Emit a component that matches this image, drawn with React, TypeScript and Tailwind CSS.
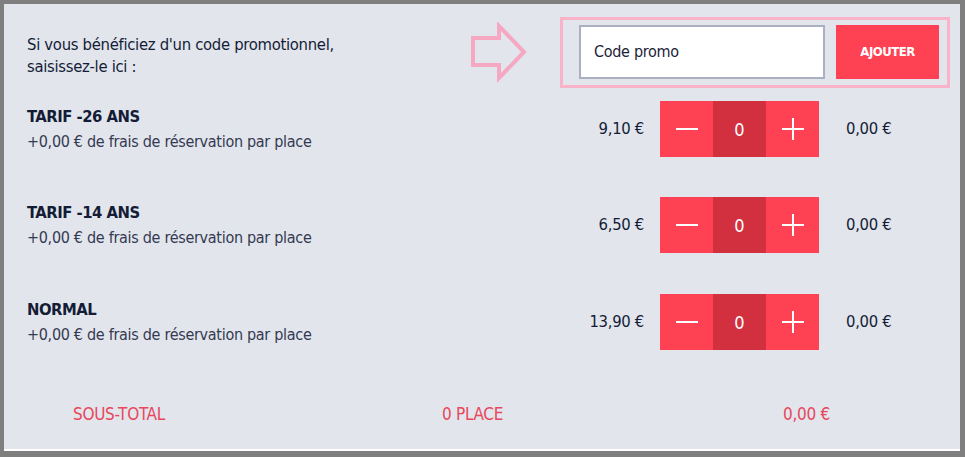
import React from "react";

const FONT = "font-['Liberation_Sans_Narrow','DejaVu_Sans_Condensed','Liberation_Sans',sans-serif]";

function Minus() {
  return (
    <svg width="24" height="24" viewBox="0 0 24 24">
      <line x1="1" y1="12" x2="23" y2="12" stroke="white" strokeWidth="2" />
    </svg>
  );
}
function Plus() {
  return (
    <svg width="24" height="24" viewBox="0 0 24 24">
      <line x1="1" y1="12" x2="23" y2="12" stroke="white" strokeWidth="2" />
      <line x1="12" y1="1" x2="12" y2="23" stroke="white" strokeWidth="2" />
    </svg>
  );
}

function Row({ title, price, className }: { title: string; price: string; className: string }) {
  return (
    <div className={`grid grid-cols-[533px_100px_159px_141px] items-center h-[56px] pl-[23px] ${className}`}>
      <div className="flex flex-col">
        <div className="text-[16.5px] leading-[25px] tracking-[-0.5px] text-[#141c36] font-bold">{title}</div>
        <div className="text-[16px] leading-[25px] tracking-[-0.3px] text-[#343a52]">
          +0,00 € de frais de réservation par place
        </div>
      </div>
      <div className="text-right text-[16.5px] tracking-[-0.3px] text-[#141c36] pr-4">{price}</div>
      <div className="flex h-[56px] w-[159px]">
        <div className="w-[53px] bg-[#fe4153] flex items-center justify-center">
          <Minus />
        </div>
        <div className="w-[53px] bg-[#d3303f] flex items-center justify-center text-white text-[18px]">0</div>
        <div className="w-[53px] bg-[#fe4153] flex items-center justify-center">
          <Plus />
        </div>
      </div>
      <div className="pl-[27px] text-[16.5px] tracking-[-0.3px] text-[#141c36]">0,00 €</div>
    </div>
  );
}

export default function App() {
  return (
    <div className={`w-[965px] h-[457px] bg-[#7f7f7f] pt-1 pl-1 pr-[5px] ${FONT}`}>
      <div className="h-[447px] bg-[#e2e5ec] border-b-2 border-white">
        <div className="flex items-start pt-[13px] pl-[23px]">
          <div className="w-[443px] mt-[17px] text-[16.5px] leading-[22px] tracking-[-0.3px] text-[#141c36]">
            Si vous bénéficiez d'un code promotionnel,
            <br />
            saisissez-le ici :
          </div>
          <svg width="60" height="62" viewBox="0 0 60 62" className="mt-[5px]">
            <path
              d="M3 16 L29 16 L29 4 L54 30 L29 56 L29 43 L3 43 Z"
              fill="none"
              stroke="#f6a8c2"
              strokeWidth="4"
              strokeLinejoin="miter"
            />
          </svg>
          <div className="ml-[30px] w-[390px] h-[71px] border-[3px] border-[#f8b3c9] flex items-start pt-[5px] pl-[16px]">
            <div className="w-[246px] h-[54px] bg-white border-2 border-[#aab0c2] flex items-center pl-[13px] text-[16px] tracking-[-0.3px] text-[#1b2238]">
              Code promo
            </div>
            <div className="ml-[11px] w-[103px] h-[54px] bg-[#fe4153] flex items-center justify-center text-white text-[13px] tracking-[-0.5px] font-bold">
              AJOUTER
            </div>
          </div>
        </div>
        <Row title="TARIF -26 ANS" price="9,10 €" className="mt-[13px]" />
        <Row title="TARIF -14 ANS" price="6,50 €" className="mt-[40px]" />
        <Row title="NORMAL" price="13,90 €" className="mt-[41px]" />
        <div className="flex items-center pl-[69px] mt-[50px] h-[30px] text-[17px] tracking-[-0.3px] text-[#e8475c]">
          <div className="w-[369px]">SOUS-TOTAL</div>
          <div className="w-[341px]">0 PLACE</div>
          <div>0,00 €</div>
        </div>
      </div>
    </div>
  );
}
